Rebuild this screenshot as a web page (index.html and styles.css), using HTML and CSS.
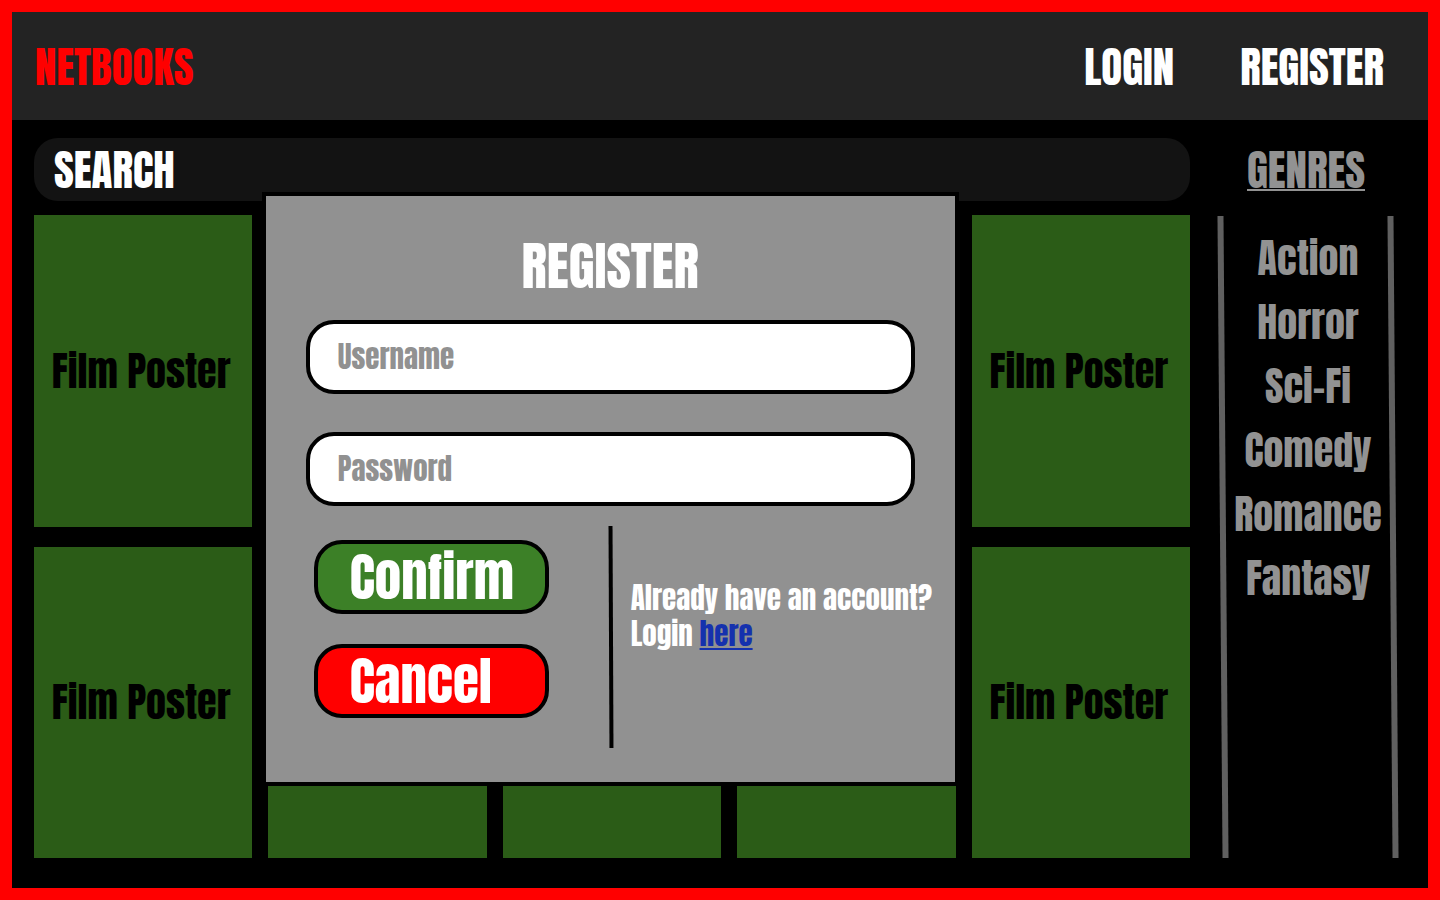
FILE: index.html
```html
<!DOCTYPE html>
<html lang="en">
<head>
<meta charset="utf-8">
<title>Netbooks</title>
<link rel="stylesheet" href="styles.css">
</head>
<body>
<header class="topbar">
  <a class="brand" href="#">NETBOOKS</a>
  <nav class="account">
    <a href="#">LOGIN</a>
    <a href="#">REGISTER</a>
  </nav>
</header>
<main class="page">
  <section class="catalogue">
    <input class="search" type="search" placeholder="SEARCH" aria-label="Search">
    <div class="posters">
      <div class="poster">Film Poster</div>
      <div class="poster"></div>
      <div class="poster"></div>
      <div class="poster"></div>
      <div class="poster">Film Poster</div>
      <div class="poster">Film Poster</div>
      <div class="poster"></div>
      <div class="poster"></div>
      <div class="poster"></div>
      <div class="poster">Film Poster</div>
    </div>
    <form class="dialog" role="dialog" aria-labelledby="dialog-title">
      <h1 class="dialog-title" id="dialog-title">REGISTER</h1>
      <input class="field" type="text" placeholder="Username" aria-label="Username">
      <input class="field" type="password" placeholder="Password" aria-label="Password">
      <div class="dialog-foot">
        <div class="actions">
          <button class="action confirm" type="submit">Confirm</button>
          <button class="action cancel" type="button">Cancel</button>
        </div>
        <div class="divider"></div>
        <p class="hint">Already have an account?<br>Login <a href="#">here</a></p>
      </div>
    </form>
  </section>
  <aside class="genres">
    <h2 class="genres-title">GENRES</h2>
    <div class="genres-body">
      <span class="rail"></span>
      <ul class="genre-list">
        <li><a href="#">Action</a></li>
        <li><a href="#">Horror</a></li>
        <li><a href="#">Sci-Fi</a></li>
        <li><a href="#">Comedy</a></li>
        <li><a href="#">Romance</a></li>
        <li><a href="#">Fantasy</a></li>
      </ul>
      <span class="rail"></span>
    </div>
  </aside>
</main>
</body>
</html>
```
FILE: styles.css
```css
* { box-sizing: border-box; }

body {
  margin: 0;
  min-height: 100vh;
  display: flex;
  flex-direction: column;
  border: 12px solid #ff0000;
  background: #000;
  color: #fff;
  font-family: Impact, Anton, "Liberation Sans Narrow", "DejaVu Sans Condensed", sans-serif;
  font-weight: 400;
  font-size: 40px;
  line-height: 48px;
}

input, button { font: inherit; }
a { color: inherit; text-decoration: none; }

.topbar {
  display: flex;
  justify-content: space-between;
  align-items: center;
  height: 108px;
  padding: 2px 44px 0 23px;
  background: #232323;
  font-size: 43px;
}
.brand { color: #ff0000; }
.account { display: flex; gap: 66px; }

.page {
  flex: 1;
  display: flex;
  gap: 30px;
  padding: 18px 32px 30px 22px;
}

.catalogue {
  position: relative;
  flex: 1;
  display: flex;
  flex-direction: column;
  gap: 14px;
}
.search {
  width: 100%;
  height: 63px;
  padding: 0 20px;
  border: 0;
  border-radius: 24px;
  background: #131313;
  color: #fff;
  font-size: 43px;
}
.search::placeholder { color: #fff; opacity: 1; }

.posters {
  flex: 1;
  display: grid;
  grid-template-columns: repeat(5, 1fr);
  grid-template-rows: repeat(2, 1fr);
  gap: 20px 16px;
}
.poster {
  display: flex;
  align-items: center;
  justify-content: center;
  padding-right: 4px;
  background: #2b5c17;
  color: #000;
  white-space: nowrap;
}

.dialog {
  position: absolute;
  top: 54px;
  left: 19.7%;
  width: 60.3%;
  min-width: 680px;
  display: flex;
  flex-direction: column;
  padding: 40px 40px 34px;
  border: 4px solid #000;
  background: #919191;
}
.dialog-title {
  margin: 0 0 24px;
  font-size: 53px;
  font-weight: inherit;
  line-height: 60px;
  text-align: center;
}
.field {
  width: 100%;
  height: 74px;
  margin-bottom: 38px;
  padding: 0 28px;
  border: 4px solid #000;
  border-radius: 28px;
  background: #fff;
  color: #919191;
  font-size: 29px;
}
.field::placeholder { color: #919191; opacity: 1; }
.field + .field { margin-bottom: 20px; }

.dialog-foot { display: flex; }
.actions {
  display: flex;
  flex-direction: column;
  gap: 30px;
  padding: 14px 60px 0 8px;
}
.action {
  width: 235px;
  height: 74px;
  padding: 0 32px;
  border: 4px solid #000;
  border-radius: 28px;
  color: #fff;
  font-size: 53px;
  line-height: 60px;
  text-align: left;
}
.confirm { background: #3c8027; }
.cancel { background: #ff0000; }
.divider {
  flex: none;
  width: 4px;
  height: 222px;
  background: #000;
  transform: skewX(0.25deg);
}
.hint {
  margin: 0;
  padding: 54px 0 0 18px;
  font-size: 29px;
  line-height: 36px;
  white-space: nowrap;
}
.hint a { color: #1531ae; text-decoration: underline; }

.genres {
  flex: none;
  display: flex;
  flex-direction: column;
  width: 176px;
}
.genres-title {
  margin: 0;
  padding: 8px 4px 22px 0;
  color: #929292;
  font-size: 43px;
  font-weight: inherit;
  text-align: center;
  text-decoration: underline;
  text-decoration-thickness: 2px;
}
.genres-body {
  flex: 1;
  display: flex;
  justify-content: space-between;
}
.rail {
  flex: none;
  width: 6px;
  background: #606060;
  transform: skewX(0.45deg);
}
.genre-list {
  margin: 0;
  padding: 18px 0 0;
  list-style: none;
  color: #929292;
  text-align: center;
}
.genre-list li { height: 64px; }
```
